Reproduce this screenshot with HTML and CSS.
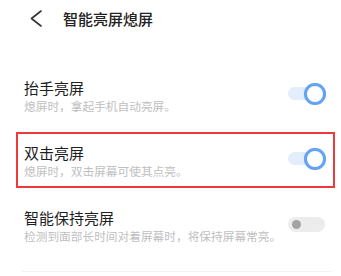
FILE: index.html
```html
<!DOCTYPE html>
<html lang="zh">
<head>
<meta charset="utf-8">
<link rel="stylesheet" href="styles.css">
</head>
<body>
<div class="header">
  <svg class="back" width="12" height="17" viewBox="0 0 12 17"><polyline points="11,1 1.5,8.5 11,16" fill="none" stroke="#333" stroke-width="1.6" stroke-linecap="round" stroke-linejoin="round"/></svg>
  <div class="title">智能亮屏熄屏</div>
</div>
<div class="list">
  <div class="row">
    <div class="text">
      <div class="name">抬手亮屏</div>
      <div class="desc">熄屏时，拿起手机自动亮屏。</div>
    </div>
    <div class="switch on"><span class="track"></span><span class="knob"></span></div>
  </div>
  <div class="row selected">
    <div class="text">
      <div class="name">双击亮屏</div>
      <div class="desc">熄屏时，双击屏幕可使其点亮。</div>
    </div>
    <div class="switch on"><span class="track"></span><span class="knob"></span></div>
  </div>
  <div class="row">
    <div class="text">
      <div class="name">智能保持亮屏</div>
      <div class="desc">检测到面部长时间对着屏幕时，将保持屏幕常亮。</div>
    </div>
    <div class="switch off"><span class="track"></span><span class="knob"></span></div>
  </div>
  <div class="divider"></div>
</div>
</body>
</html>
```
FILE: styles.css
```css
html, body {
  margin: 0;
  padding: 0;
  background: #ffffff;
  font-family: "Noto Sans CJK SC", "Noto Sans", sans-serif;
}
.header {
  height: 37px;
  display: flex;
  align-items: center;
  padding-left: 30px;
}
.back { display: block; }
.title {
  margin-left: 21px;
  font-size: 15px;
  font-weight: 500;
  color: #222;
  line-height: 20px;
}
.list {
  margin-top: 30px;
  display: flex;
  flex-direction: column;
  gap: 9px;
}
.row {
  margin: 0 6px 0 16px;
  height: 56px;
  box-sizing: border-box;
  border: 2px solid transparent;
  display: flex;
  align-items: center;
  justify-content: space-between;
  padding: 0 8px 0 6px;
}
.row.selected { border-color: #ee3a3a; }
.text { display: flex; flex-direction: column; margin-top: 1px; }
.name {
  font-size: 15px;
  line-height: 20px;
  color: #1e1e1e;
}
.desc {
  font-size: 11.7px;
  line-height: 16px;
  color: #c0c0c0;
}
.switch {
  position: relative;
  width: 37px;
  height: 22px;
  margin-bottom: 3px;
}
.switch .track {
  position: absolute;
  left: 0;
  border-radius: 8px;
}
.switch.on .track {
  top: 4px;
  width: 32px;
  height: 13px;
  background: #e3edfc;
}
.switch.on .knob {
  position: absolute;
  right: -1px;
  top: 0;
  width: 22px;
  height: 22px;
  box-sizing: border-box;
  border-radius: 50%;
  border: 3px solid #64a3f3;
  background: #fff;
  box-shadow: 0 0 1px rgba(80, 140, 230, 0.4);
}
.switch.off .track {
  top: 4px;
  width: 37px;
  height: 15px;
  background: #ececec;
}
.switch.off .knob {
  position: absolute;
  left: 4px;
  top: 7px;
  width: 9px;
  height: 9px;
  border-radius: 50%;
  background: #a3a3a3;
}
.divider {
  margin: 9px 9px 0 22px;
  height: 1px;
  background: #f3f3f3;
}
```
